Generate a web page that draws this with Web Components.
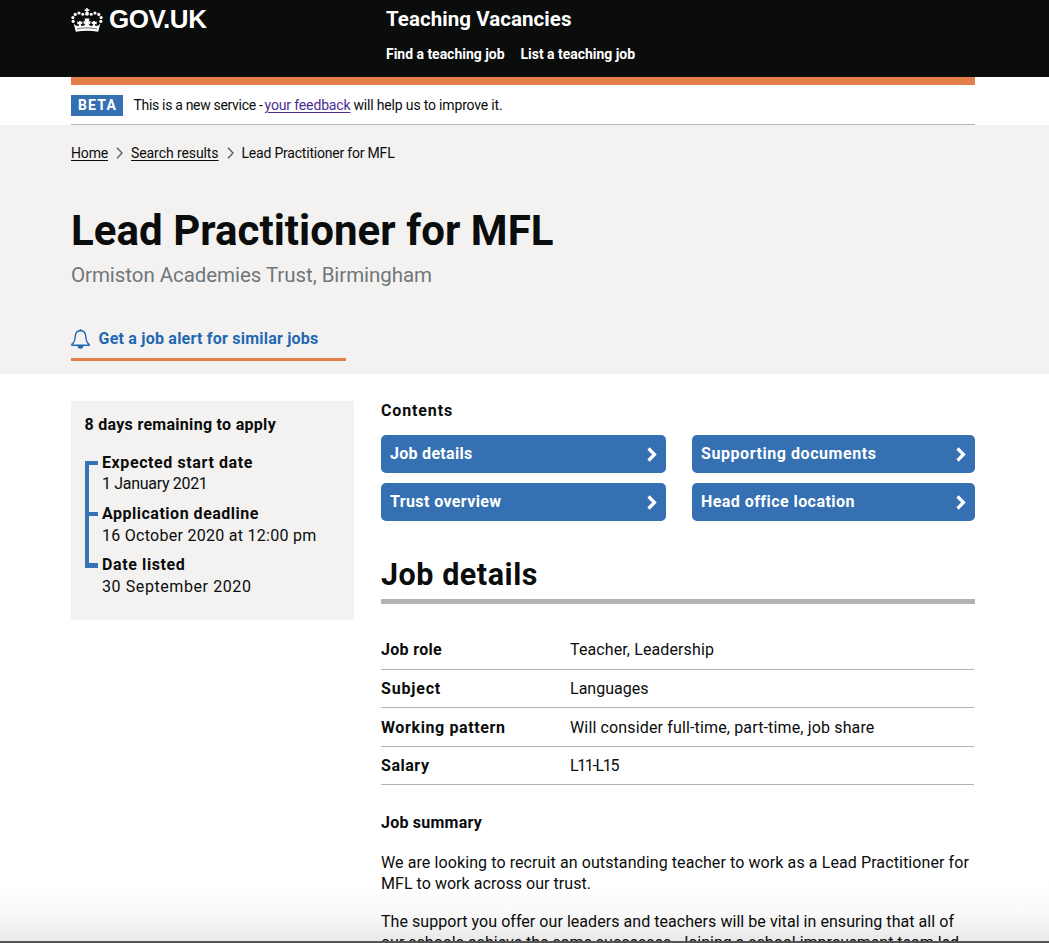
<!DOCTYPE html>
<html lang="en">
<head>
<meta charset="utf-8">
<title>Lead Practitioner for MFL</title>
<style>
html,body{margin:0;padding:0;background:#fff}
body{font-family:Roboto,"Noto Sans",sans-serif;color:#0b0c0c}
</style>
</head>
<body>
<vacancy-page></vacancy-page>
<script>
const define = (name, html, after) => {
  const t = document.createElement('template');
  t.innerHTML = html;
  customElements.define(name, class extends HTMLElement {
    connectedCallback() {
      if (this.shadowRoot) return;
      this.attachShadow({mode: 'open'}).append(t.content.cloneNode(true));
      if (after) after(this, this.shadowRoot);
    }
  });
};

// A single line of type: s = size, w = measure in px, b = bold, u = underlined
define('type-line', `<style>
:host{display:block;white-space:pre;line-height:20px;width:max-content}
:host([b]){font-weight:700}
:host([u]) span{text-decoration:underline;text-decoration-thickness:1px;text-underline-offset:2px}
</style><span><slot></slot></span>`, (el, root) => {
  el.style.fontSize = (el.getAttribute('s') || 16) + 'px';
  const w = +el.getAttribute('w');
  if (!w) return;
  const natural = root.querySelector('span').getBoundingClientRect().width;
  el.style.letterSpacing = (w - natural) / el.textContent.length + 'px';
});

define('crown-icon', `<style>:host{display:block;width:32px;height:25px}svg{display:block}</style>
<svg width="32" height="25" viewBox="0 0 32 25" fill="#fff">
<circle cx="16" cy="5.8" r="2"/><path d="M15.2 0h1.6l-.2 1.5 1.7-.2v1.8l-1.7-.2.2 1.5h-1.6l.2-1.5-1.7.2V1.3l1.7.2z"/>
<circle cx="11.8" cy="6.3" r="1.5"/><circle cx="8" cy="5" r="1.6"/><circle cx="4.2" cy="6.4" r="1.6"/><circle cx="1.9" cy="9.6" r="1.6"/><circle cx="2.2" cy="13.3" r="1.6"/>
<circle cx="20.2" cy="6.3" r="1.5"/><circle cx="24" cy="5" r="1.6"/><circle cx="27.8" cy="6.4" r="1.6"/><circle cx="30.1" cy="9.6" r="1.6"/><circle cx="29.8" cy="13.3" r="1.6"/>
<path d="M4.8 23.8 2.7 15.5c1.4 1.7 2.7 2.5 4 2.5 1.2 0 1.7-.8 1.2-2l-1.7.4.2-3.2 1.3.9c.2-1.5 2.2-1.5 2.4 0l1.3-.9-.2 3.1-1.4-.5c-.3 1.2.4 2.1 1.7 2.1 1.6 0 2.7-1 2.8-2.5l-1.7.9v-3.6l1.7.9-.8-3.1h5l-.8 3.1 1.7-.9v3.6l-1.7-.9c.1 1.5 1.2 2.500 2.800 2.500 1.300 0 2-.9 1.700-2.100l-1.400.5-.2-3.100 1.300.9c.2-1.500 2.200-1.500 2.400 0l1.300-.9.2 3.200-1.700-.4c-.5 1.200 0 2 1.200 2 1.300 0 2.600-.8 4-2.500l-2.100 8.300c-7.600-1.400-14.800-1.400-22.400 0z"/>
<path d="M6 20.9c6.8-1.4 13.2-1.4 20 0" stroke="#0b0c0c" stroke-width=".6" fill="none"/></svg>`);

define('bell-icon', `<style>:host{display:block;width:19px;height:20px;margin-top:-.5px}svg{display:block}</style>
<svg width="19" height="20" viewBox="0 0 19 20" fill="none" stroke="#1f68b2" stroke-width="1.4" stroke-linejoin="round">
<path d="M9.5 1.5C6.2 1.7 4.6 4 4.3 7l-.5 3.5C3.4 12.8 2.5 14.3.8 15.4v.9h17.4v-.9c-1.7-1.1-2.6-2.6-3-4.9L14.700 7c-.3-3-1.900-5.300-5.200-5.500z"/><path d="M9.5.2v1.4"/><path d="M7 16.6c.6 3.1 4.4 3.1 5 0z" fill="#1f68b2"/></svg>`);

define('site-header', `<style>
:host{display:block;background:#0b0c0c;color:#fff;height:77px}
.in{display:grid;grid-template-columns:315px 1fr;padding:0 74px 0 71px}
.logo{display:flex;gap:6px;padding-top:7.5px}
.logo type-line{font-family:"Liberation Sans",Arial,sans-serif;line-height:24px;margin-top:-.8px}
.name{padding-top:9px}nav{display:flex;gap:16px;padding-top:15px}
</style><div class="in"><div class="logo"><crown-icon></crown-icon><type-line b s="26" w="97.5">GOV.UK</type-line></div>
<div><type-line class="name" b s="20.5" w="185.5">Teaching Vacancies</type-line>
<nav><type-line b s="14" w="118.5">Find a teaching job</type-line><type-line b s="14" w="114.5">List a teaching job</type-line></nav></div></div>`);

define('phase-banner', `<style>
:host{display:flex;box-sizing:border-box;height:48px;margin:0 74px 0 71px;border-top:8px solid #e5804a;border-bottom:1px solid #b1b4b6;padding-top:10px}
.tag{background:#3570b3;color:#fff;width:52px;height:21px;box-sizing:border-box;padding:0 0 0 7px;margin-right:10.5px}
.copy{display:flex}.u{color:#4c2c92}.a{margin-right:2px}.c{margin-left:3px}
</style><div class="tag"><type-line b s="14" w="39">BETA</type-line></div>
<div class="copy"><type-line class="a" s="14" w="129">This is a new service -</type-line><type-line class="u" u s="14" w="86">your feedback</type-line><type-line class="c" s="14" w="149">will help us to improve it.</type-line></div>`);

define('crumb-arrow', `<style>:host{display:block;width:7px;height:12px;margin:3.5px 8px 0 8px}svg{display:block}</style>
<svg width="7" height="12" fill="none" stroke="#505a5f" stroke-width="1.3"><path d="m1 .8 5 5.2-5 5.2"/></svg>`);

define('vacancy-hero', `<style>
:host{display:block;box-sizing:border-box;height:249px;background:#f3f2f1;padding:18px 74px 0 71px}
.crumbs{display:flex}.h{line-height:48px;margin-top:44px}.sub{color:#6f777b;line-height:26px;margin-top:7px}
.alert{display:flex;box-sizing:border-box;width:275px;height:32px;margin-top:41px;border-bottom:3px solid #e5804a;color:#1f68b2;gap:8.5px}
</style><div class="crumbs"><type-line u s="14" w="37">Home</type-line><crumb-arrow></crumb-arrow><type-line u s="14" w="87.5">Search results</type-line><crumb-arrow></crumb-arrow><type-line s="14" w="153">Lead Practitioner for MFL</type-line></div>
<type-line class="h" b s="42" w="482.5">Lead Practitioner for MFL</type-line>
<type-line class="sub" s="20.5" w="361">Ormiston Academies Trust, Birmingham</type-line>
<div class="alert"><bell-icon></bell-icon><type-line b w="220">Get a job alert for similar jobs</type-line></div>`);

define('date-item', `<style>:host{display:block}::slotted(type-line){line-height:21.5px}</style><slot></slot>`);

define('date-panel', `<style>
:host{display:block;box-sizing:border-box;width:283px;height:219px;background:#f3f2f1;padding:14px 13px 0 13.5px}
.t{display:grid;grid-template-columns:13px 1fr;column-gap:4.5px;margin-top:17px}
.rail{box-sizing:border-box;height:107px;margin-top:9px;display:flex;flex-direction:column;justify-content:space-between;border-left:4px solid #3573b5}
.rail i{height:4.2px;background:#3573b5}
.items{display:flex;flex-direction:column;gap:8.3px;padding-top:.3px}
</style><type-line b w="191.5">8 days remaining to apply</type-line>
<div class="t"><div class="rail"><i></i><i></i><i></i></div><div class="items">
<date-item><type-line b w="151">Expected start date</type-line><type-line w="105.5">1 January 2021</type-line></date-item>
<date-item><type-line b w="157">Application deadline</type-line><type-line w="214.5">16 October 2020 at 12:00 pm</type-line></date-item>
<date-item><type-line b w="83.5">Date listed</type-line><type-line w="149.5">30 September 2020</type-line></date-item></div></div>`);

define('jump-link', `<style>
:host{display:flex;box-sizing:border-box;height:38.5px;border-radius:5px;background:#3570b3;color:#fff;justify-content:space-between;padding:9px 8px 0 9px}
svg{display:block;margin-top:3px}</style><slot></slot><svg width="11" height="15" fill="none" stroke="#fff" stroke-width="3.2"><path d="m1.5 1.5 6 6-6 6"/></svg>`);

define('fact-row', `<style>:host{display:grid;grid-template-columns:189px 1fr;box-sizing:border-box;height:38.6px;padding-top:9.4px;border-bottom:1px solid #b1b4b6}</style><slot></slot>`);

define('vacancy-main', `<style>
:host{display:grid;grid-template-columns:283px 594px;column-gap:27px;padding:26.6px 74px 0 71px}
.links{display:grid;grid-template-columns:284.5px 283px;gap:9.5px 26.5px;margin-top:14px}
.h2{line-height:36px;margin-top:36px}.rule{height:5px;background:#b3b3b3;margin:6.4px 0 26.5px}
.facts{width:593px}.sum{margin:27.5px 0 19.5px}.p{line-height:21px}.p2{margin-top:16.5px}
</style><date-panel></date-panel><section>
<type-line b w="72">Contents</type-line>
<div class="links"><jump-link><type-line b w="82.5">Job details</type-line></jump-link><jump-link><type-line b w="175.5">Supporting documents</type-line></jump-link><jump-link><type-line b w="111.5">Trust overview</type-line></jump-link><jump-link><type-line b w="153">Head office location</type-line></jump-link></div>
<type-line class="h2" b s="30.5" w="157">Job details</type-line><div class="rule"></div>
<div class="facts">
<fact-row><type-line b w="61">Job role</type-line><type-line w="144">Teacher, Leadership</type-line></fact-row>
<fact-row><type-line b w="60">Subject</type-line><type-line w="78.5">Languages</type-line></fact-row>
<fact-row><type-line b w="124.5">Working pattern</type-line><type-line w="304.5">Will consider full-time, part-time, job share</type-line></fact-row>
<fact-row><type-line b w="48.5">Salary</type-line><type-line w="48">L11-L15</type-line></fact-row></div>
<type-line class="sum" b w="101">Job summary</type-line>
<type-line class="p" w="588">We are looking to recruit an outstanding teacher to work as a Lead Practitioner for</type-line>
<type-line class="p" w="210">MFL to work across our trust.</type-line>
<type-line class="p p2" w="573">The support you offer our leaders and teachers will be vital in ensuring that all of</type-line>
<type-line class="p" w="578">our schools achieve the same successes. Joining a school improvement team led</type-line>
</section>`);

define('vacancy-page', `<style>
:host{display:block;position:relative;width:1049px;height:943px;overflow:hidden;background:#fff}
.fade{position:absolute;left:0;right:0;bottom:0;height:63px;box-sizing:border-box;background:linear-gradient(rgba(0,0,0,0),rgba(0,0,0,.025) 55%,rgba(0,0,0,.09));border-bottom:2px solid #555}
</style><site-header></site-header><phase-banner></phase-banner><vacancy-hero></vacancy-hero><vacancy-main></vacancy-main><div class="fade"></div>`);
</script>
</body>
</html>
